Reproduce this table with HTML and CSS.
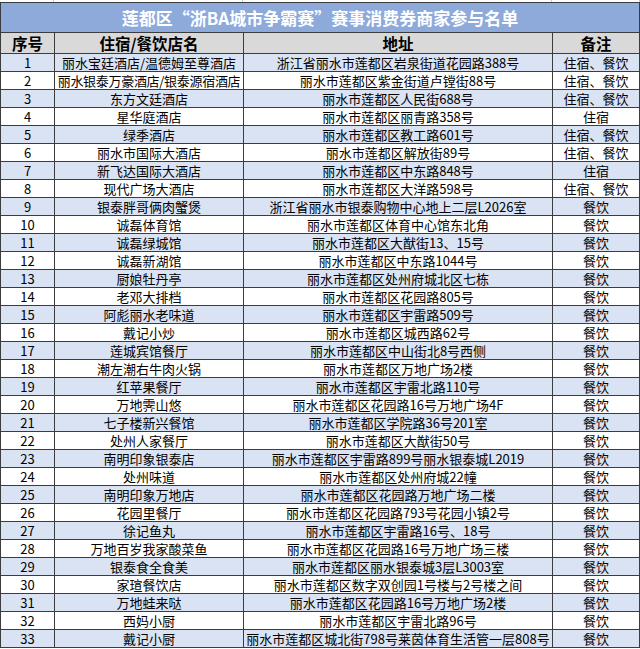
FILE: index.html
```html
<!DOCTYPE html>
<html lang="zh-CN">
<head>
<meta charset="utf-8">
<title>莲都区“浙BA城市争霸赛”赛事消费券商家参与名单</title>
<link rel="stylesheet" href="styles.css">
</head>
<body>
<div class="strip"><span class="s1"></span><span class="s2"></span><span class="s3"></span><span class="s4"></span></div>
<table class="list">
<colgroup><col class="c1"><col class="c2"><col class="c3"><col class="c4"></colgroup>
<thead>
<tr class="title"><th colspan="4">莲都区“浙BA城市争霸赛”赛事消费券商家参与名单</th></tr>
<tr class="head"><th>序号</th><th>住宿/餐饮店名</th><th>地址</th><th>备注</th></tr>
</thead>
<tbody>
<tr><td>1</td><td>丽水宝廷酒店/温德姆至尊酒店</td><td>浙江省丽水市莲都区岩泉街道花园路388号</td><td>住宿、餐饮</td></tr>
<tr><td>2</td><td class="tight">丽水银泰万豪酒店/银泰源宿酒店</td><td>丽水市莲都区紫金街道卢镗街88号</td><td>住宿、餐饮</td></tr>
<tr><td>3</td><td>东方文廷酒店</td><td>丽水市莲都区人民街688号</td><td>住宿、餐饮</td></tr>
<tr><td>4</td><td>星华庭酒店</td><td>丽水市莲都区丽青路358号</td><td>住宿</td></tr>
<tr><td>5</td><td>绿季酒店</td><td>丽水市莲都区教工路601号</td><td>住宿、餐饮</td></tr>
<tr><td>6</td><td>丽水市国际大酒店</td><td>丽水市莲都区解放街89号</td><td>住宿、餐饮</td></tr>
<tr><td>7</td><td>新飞达国际大酒店</td><td>丽水市莲都区中东路848号</td><td>住宿</td></tr>
<tr><td>8</td><td>现代广场大酒店</td><td>丽水市莲都区大洋路598号</td><td>住宿、餐饮</td></tr>
<tr><td>9</td><td>银泰胖哥俩肉蟹煲</td><td>浙江省丽水市银泰购物中心地上二层L2026室</td><td>餐饮</td></tr>
<tr><td>10</td><td>诚磊体育馆</td><td>丽水市莲都区体育中心馆东北角</td><td>餐饮</td></tr>
<tr><td>11</td><td>诚磊绿城馆</td><td>丽水市莲都区大猷街13、15号</td><td>餐饮</td></tr>
<tr><td>12</td><td>诚磊新湖馆</td><td>丽水市莲都区中东路1044号</td><td>餐饮</td></tr>
<tr><td>13</td><td>厨娘牡丹亭</td><td>丽水市莲都区处州府城北区七栋</td><td>餐饮</td></tr>
<tr><td>14</td><td>老邓大排档</td><td>丽水市莲都区花园路805号</td><td>餐饮</td></tr>
<tr><td>15</td><td>阿彪丽水老味道</td><td>丽水市莲都区宇雷路509号</td><td>餐饮</td></tr>
<tr><td>16</td><td>戴记小炒</td><td>丽水市莲都区城西路62号</td><td>餐饮</td></tr>
<tr><td>17</td><td>莲城宾馆餐厅</td><td>丽水市莲都区中山街北8号西侧</td><td>餐饮</td></tr>
<tr><td>18</td><td>潮左潮右牛肉火锅</td><td>丽水市莲都区万地广场2楼</td><td>餐饮</td></tr>
<tr><td>19</td><td>红苹果餐厅</td><td>丽水市莲都区宇雷北路110号</td><td>餐饮</td></tr>
<tr><td>20</td><td>万地霁山悠</td><td>丽水市莲都区花园路16号万地广场4F</td><td>餐饮</td></tr>
<tr><td>21</td><td>七子楼新兴餐馆</td><td>丽水市莲都区学院路36号201室</td><td>餐饮</td></tr>
<tr><td>22</td><td>处州人家餐厅</td><td>丽水市莲都区大猷街50号</td><td>餐饮</td></tr>
<tr><td>23</td><td>南明印象银泰店</td><td>丽水市莲都区宇雷路899号丽水银泰城L2019</td><td>餐饮</td></tr>
<tr><td>24</td><td>处州味道</td><td>丽水市莲都区处州府城22幢</td><td>餐饮</td></tr>
<tr><td>25</td><td>南明印象万地店</td><td>丽水市莲都区花园路万地广场二楼</td><td>餐饮</td></tr>
<tr><td>26</td><td>花园里餐厅</td><td>丽水市莲都区花园路793号花园小镇2号</td><td>餐饮</td></tr>
<tr><td>27</td><td>徐记鱼丸</td><td>丽水市莲都区宇雷路16号、18号</td><td>餐饮</td></tr>
<tr><td>28</td><td>万地百岁我家酸菜鱼</td><td>丽水市莲都区花园路16号万地广场三楼</td><td>餐饮</td></tr>
<tr><td>29</td><td>银泰食全食美</td><td>丽水市莲都区丽水银泰城3层L3003室</td><td>餐饮</td></tr>
<tr><td>30</td><td>家瑄餐饮店</td><td>丽水市莲都区数字双创园1号楼与2号楼之间</td><td>餐饮</td></tr>
<tr><td>31</td><td>万地蛙来哒</td><td>丽水市莲都区花园路16号万地广场2楼</td><td>餐饮</td></tr>
<tr><td>32</td><td>西妈小厨</td><td>丽水市莲都区宇雷北路96号</td><td>餐饮</td></tr>
<tr><td>33</td><td>戴记小厨</td><td>丽水市莲都区城北街798号莱茵体育生活管一层808号</td><td>餐饮</td></tr>
</tbody>
</table>
</body>
</html>
```
FILE: styles.css
```css
html, body {
  margin: 0;
  padding: 0;
  background: #ffffff;
}
body {
  width: 640px;
  font-family: "Noto Sans CJK SC", "Noto Sans", sans-serif;
  color: #000000;
}
.strip {
  display: grid;
  grid-template-columns: 54px 189px 309px 88px;
  height: 2px;
}
.strip span {
  border-right: 1px solid #c8c8c8;
}
.list {
  border-collapse: collapse;
  table-layout: fixed;
  width: 639px;
}
.c1 { width: 54px; }
.c2 { width: 189px; }
.c3 { width: 309px; }
.c4 { width: 87px; }
.list th,
.list td {
  border: 1px solid #3c3c3c;
  padding: 0;
  text-align: center;
  white-space: nowrap;
  overflow: hidden;
}
.title th {
  background: #8eaadb;
  color: #ffffff;
  font-size: 17px;
  font-weight: 700;
  line-height: 29px;
  height: 29px;
}
.head th {
  background: #d9d9d9;
  font-size: 15.5px;
  font-weight: 700;
  line-height: 20px;
  height: 20px;
}
.list td {
  font-size: 13px;
  line-height: 17px;
  height: 17px;
}
.list tbody tr:nth-child(odd) td {
  background: #dae3f3;
}
.list td.tight {
  letter-spacing: -0.3px;
}
```
